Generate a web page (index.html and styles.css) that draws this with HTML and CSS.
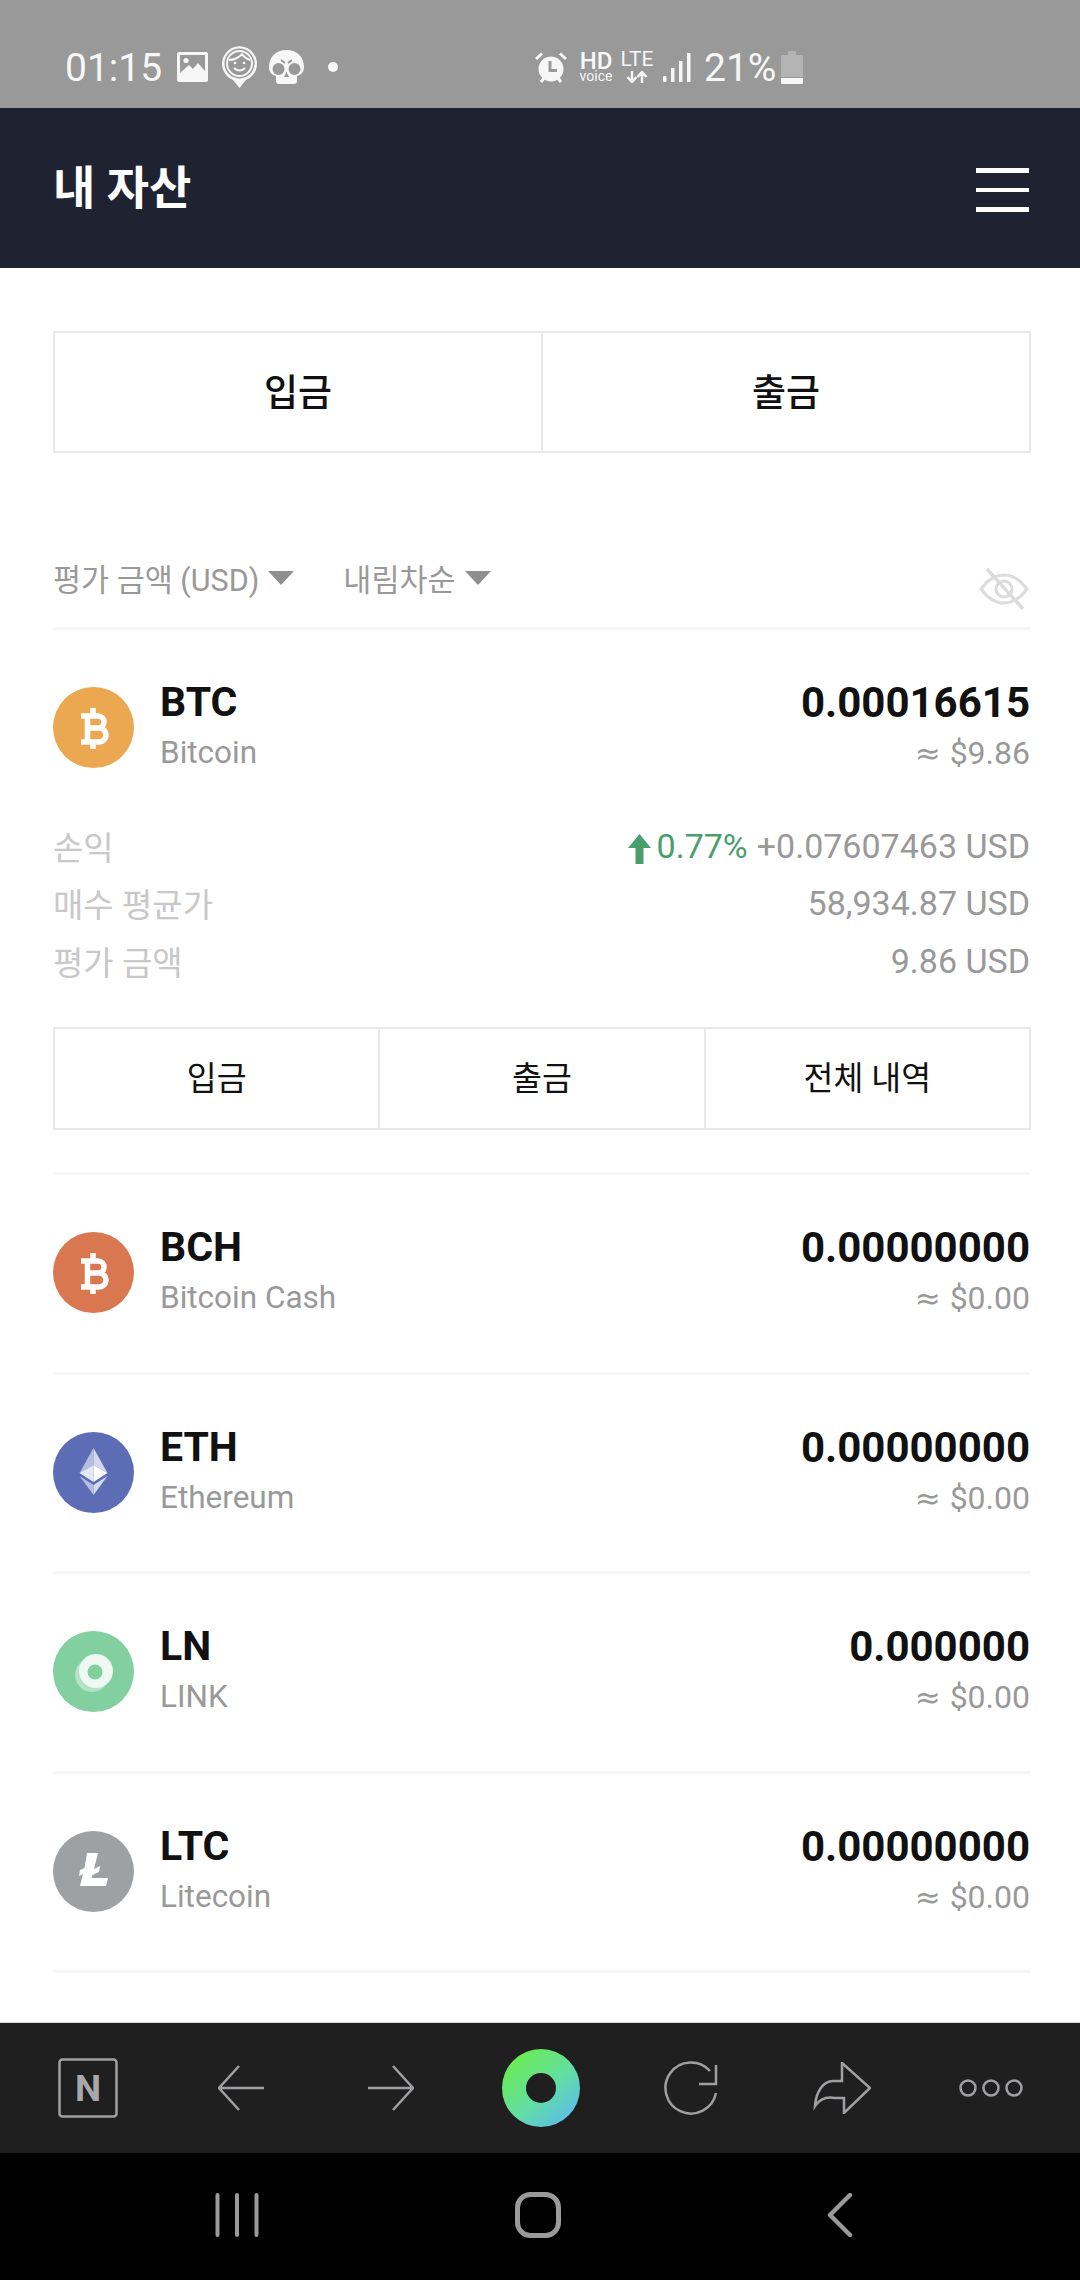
FILE: index.html
```html
<!DOCTYPE html>
<html lang="ko">
<head>
    <meta charset="UTF-8">
    <meta name="viewport" content="width=device-width, initial-scale=1.0">
    <title>내 자산</title>
    <link rel="stylesheet" href="styles.css">
</head>
<body>
    <div class="status-bar">
        <div class="status-left">
            <span class="status-time">01:15</span>
            <svg class="st-image" width="31" height="30" viewBox="0 0 31 30">
                <rect width="31" height="30" rx="2" fill="#f7f7f7"/>
                <rect x="3" y="3" width="25" height="20" fill="#999"/>
                <circle cx="9" cy="8.5" r="2.6" fill="#f7f7f7"/>
                <path d="M3 21 L12 13 L16 17 L21 11 L28 19 V24 H3 Z" fill="#f7f7f7"/>
            </svg>
            <svg class="st-pin" width="37" height="44" viewBox="0 0 37 44">
                <path d="M18.500 43 L12 35 A17.500 17.500 0 1 1 25 35 Z" fill="#f7f7f7"/>
                <circle cx="18.500" cy="18.500" r="15" fill="#999"/>
                <circle cx="18.500" cy="18.500" r="12.500" fill="none" stroke="#f7f7f7" stroke-width="2"/>
                <path d="M8 15 C12 15 18 13 21 9 C23 12 26 14 29 15" fill="none" stroke="#f7f7f7" stroke-width="2"/>
                <circle cx="14" cy="18" r="1.300" fill="#f7f7f7"/>
                <circle cx="23" cy="18" r="1.300" fill="#f7f7f7"/>
                <path d="M13 23 Q18.500 28 24 23" fill="none" stroke="#f7f7f7" stroke-width="2"/>
            </svg>
            <svg class="st-skull" width="35" height="34" viewBox="0 0 35 34">
                <path d="M17.500 0 C28 0 35 7 35 17 C35 22 32 25 28 26 V31 Q28 34 25 34 H10 Q7 34 7 31 V26 C3 25 0 22 0 17 C0 7 7 0 17.500 0 Z" fill="#f7f7f7"/>
                <circle cx="9.500" cy="19" r="6" fill="#999"/>
                <circle cx="25.500" cy="19" r="6" fill="#999"/>
                <path d="M12 10 L16 13 M23 10 L19 13" stroke="#999" stroke-width="2"/>
                <path d="M17.500 22 L20 27 H15 Z" fill="#999"/>
            </svg>
            <span class="st-dot"></span>
        </div>
        <div class="status-right">
            <svg class="st-alarm" width="32" height="32" viewBox="0 0 32 32">
                <path d="M1 7 L7 1.500 M31 7 L25 1.500 M6 30 L9 26 M26 30 L23 26" stroke="#f7f7f7" stroke-width="3"/>
                <circle cx="16" cy="17" r="12.500" fill="#f7f7f7"/>
                <path d="M15 9 V18.500 H22" fill="none" stroke="#999" stroke-width="3"/>
            </svg>
            <div class="st-hd">
                <span class="hd-big">HD</span>
                <span class="hd-small">voice</span>
            </div>
            <div class="st-lte">
                <span class="lte-text">LTE</span>
                <svg width="22" height="12" viewBox="0 0 22 12">
                    <path d="M6 0 V10 M1.500 6 L6 11 L10.500 6 M16 12 V2 M11.500 6 L16 1 L20.500 6" fill="none" stroke="#f7f7f7" stroke-width="2.400"/>
                </svg>
            </div>
            <svg class="st-signal" width="28" height="29" viewBox="0 0 28 29">
                <rect x="0" y="23" width="3.500" height="6" rx="1" fill="#f7f7f7"/>
                <rect x="8" y="15" width="3.500" height="14" fill="#f7f7f7"/>
                <rect x="16" y="8" width="3.500" height="21" fill="#f7f7f7"/>
                <rect x="24" y="0" width="3.500" height="29" fill="#f7f7f7"/>
            </svg>
            <span class="status-pct">21%</span>
            <svg class="st-battery" width="22" height="33" viewBox="0 0 22 33">
                <path d="M7 0 H15 V4 H21 Q22 4 22 5 V26 H0 V5 Q0 4 1 4 H7 Z" fill="#b4b4b4"/>
                <path d="M0 27 H22 V32 Q22 33 21 33 H1 Q0 33 0 32 Z" fill="#f7f7f7"/>
            </svg>
        </div>
    </div>

    <header class="top-bar">
        <h1>내 자산</h1>
        <div class="hamburger"><span></span><span></span><span></span></div>
    </header>

    <main class="content">
        <div class="main-actions">
            <div class="main-action">입금</div>
            <div class="main-action">출금</div>
        </div>

        <div class="filter-row">
            <div class="filter">평가 금액 (USD)<i class="caret"></i></div>
            <div class="filter">내림차순<i class="caret"></i></div>
            <svg class="eye-off" width="50" height="42" viewBox="0 0 50 42">
                <path d="M2 21 C10 10 17 7 25 7 C33 7 40 10 48 21 C40 32 33 35 25 35 C17 35 10 32 2 21 Z" fill="none" stroke="#dcdcdc" stroke-width="3"/>
                <circle cx="25" cy="21" r="8" fill="none" stroke="#dcdcdc" stroke-width="3"/>
                <path d="M8 1 L44 41" stroke="#dcdcdc" stroke-width="3.500"/>
            </svg>
        </div>

        <section class="coin coin-open">
            <div class="coin-head">
                <svg class="coin-icon" viewBox="0 0 81 81">
                    <circle cx="40.500" cy="40.500" r="40.500" fill="#eca850"/>
                    <path d="M28 29 H45 A6 6 0 0 1 45 41 H34 M34 41 H46 A7 7 0 0 1 46 55 H28 M34.500 29 V55 M40 21 V29 M40 55 V62" fill="none" stroke="#fff" stroke-width="5.500"/>
                </svg>
                <div class="coin-name">
                    <div class="coin-sym">BTC</div>
                    <div class="coin-full">Bitcoin</div>
                </div>
                <div class="coin-amount">
                    <div class="coin-qty">0.00016615</div>
                    <div class="coin-usd"><span class="approx">≈</span>$9.86</div>
                </div>
            </div>
            <div class="details">
                <div class="detail">
                    <span class="detail-label">손익</span>
                    <span class="detail-value">
                        <svg class="up-arrow" width="23" height="30" viewBox="0 0 23 30"><path d="M11.500 0 L23 14 H15.500 V30 H7.500 V14 H0 Z" fill="#4a9e6e"/></svg>
                        <span class="gain">0.77%</span>
                        <span>+0.07607463 USD</span>
                    </span>
                </div>
                <div class="detail">
                    <span class="detail-label">매수 평균가</span>
                    <span class="detail-value">58,934.87 USD</span>
                </div>
                <div class="detail">
                    <span class="detail-label">평가 금액</span>
                    <span class="detail-value">9.86 USD</span>
                </div>
            </div>
            <div class="coin-actions">
                <div class="coin-action">입금</div>
                <div class="coin-action">출금</div>
                <div class="coin-action">전체 내역</div>
            </div>
        </section>

        <section class="coin coin-row">
            <div class="coin-head">
                <svg class="coin-icon" viewBox="0 0 81 81">
                    <circle cx="40.500" cy="40.500" r="40.500" fill="#d97750"/>
                    <path d="M28 29 H45 A6 6 0 0 1 45 41 H34 M34 41 H46 A7 7 0 0 1 46 55 H28 M34.500 29 V55 M40 21 V29 M40 55 V62" fill="none" stroke="#fff" stroke-width="5.500"/>
                </svg>
                <div class="coin-name">
                    <div class="coin-sym">BCH</div>
                    <div class="coin-full">Bitcoin Cash</div>
                </div>
                <div class="coin-amount">
                    <div class="coin-qty">0.00000000</div>
                    <div class="coin-usd"><span class="approx">≈</span>$0.00</div>
                </div>
            </div>
        </section>

        <section class="coin coin-row">
            <div class="coin-head">
                <svg class="coin-icon" viewBox="0 0 81 81">
                    <circle cx="40.500" cy="40.500" r="40.500" fill="#5c6db5"/>
                    <path d="M40.500 16 L26.500 41 L40.500 33 Z" fill="#b4bddf"/>
                    <path d="M40.500 16 L54.500 41 L40.500 33 Z" fill="#d3d8ec"/>
                    <path d="M26.500 41 L40.500 33 L40.500 50 Z" fill="#e4e7f4"/>
                    <path d="M54.500 41 L40.500 33 L40.500 50 Z" fill="#fdfdfe"/>
                    <path d="M26.500 44 L40.500 53 V63 Z" fill="#b4bddf"/>
                    <path d="M54.500 44 L40.500 53 V63 Z" fill="#d3d8ec"/>
                </svg>
                <div class="coin-name">
                    <div class="coin-sym">ETH</div>
                    <div class="coin-full">Ethereum</div>
                </div>
                <div class="coin-amount">
                    <div class="coin-qty">0.00000000</div>
                    <div class="coin-usd"><span class="approx">≈</span>$0.00</div>
                </div>
            </div>
        </section>

        <section class="coin coin-row">
            <div class="coin-head">
                <svg class="coin-icon" viewBox="0 0 81 81">
                    <circle cx="40.500" cy="40.500" r="40.500" fill="#82cf9f"/>
                    <circle cx="39" cy="44" r="17" fill="#fff" fill-opacity=".4"/>
                    <circle cx="43" cy="40" r="17" fill="#eff9f3"/>
                    <circle cx="42" cy="41" r="7.500" fill="#82cf9f"/>
                </svg>
                <div class="coin-name">
                    <div class="coin-sym">LN</div>
                    <div class="coin-full">LINK</div>
                </div>
                <div class="coin-amount">
                    <div class="coin-qty">0.000000</div>
                    <div class="coin-usd"><span class="approx">≈</span>$0.00</div>
                </div>
            </div>
        </section>

        <section class="coin coin-row">
            <div class="coin-head">
                <svg class="coin-icon" viewBox="0 0 81 81">
                    <circle cx="40.500" cy="40.500" r="40.500" fill="#9ea1a4"/>
                    <path d="M34 22 H45 L41 38 L47 35 L46 41 L39.500 44 L38.500 47 H55 L53 55 H27 L30 43 L26 45 L27 39 L31.500 37 Z" fill="#fff"/>
                </svg>
                <div class="coin-name">
                    <div class="coin-sym">LTC</div>
                    <div class="coin-full">Litecoin</div>
                </div>
                <div class="coin-amount">
                    <div class="coin-qty">0.00000000</div>
                    <div class="coin-usd"><span class="approx">≈</span>$0.00</div>
                </div>
            </div>
        </section>
    </main>

    <nav class="toolbar">
        <svg class="tool-n" width="60" height="60" viewBox="0 0 60 60">
            <rect x="1.500" y="1.500" width="57" height="57" rx="3" fill="none" stroke="#a0a0a4" stroke-width="2.500"/>
            <text x="30" y="43" text-anchor="middle" font-family="Roboto" font-size="37" font-weight="700" fill="#a8a8ac">N</text>
        </svg>
        <svg width="46" height="46" viewBox="0 0 46 46">
            <path d="M46 23 H2 M21 1 L1 23 L21 45" fill="none" stroke="#a0a0a4" stroke-width="2.500"/>
        </svg>
        <svg width="46" height="46" viewBox="0 0 46 46">
            <path d="M0 23 H44 M25 1 L45 23 L25 45" fill="none" stroke="#a0a0a4" stroke-width="2.500"/>
        </svg>
        <svg width="78" height="78" viewBox="0 0 78 78">
            <defs>
                <linearGradient id="ringGrad" x1="0.150" y1="0.100" x2="0.850" y2="0.900">
                    <stop offset="0" stop-color="#6cea52"/>
                    <stop offset="0.550" stop-color="#62dfa0"/>
                    <stop offset="1" stop-color="#5cbfe6"/>
                </linearGradient>
            </defs>
            <circle cx="39" cy="39" r="39" fill="url(#ringGrad)"/>
            <circle cx="39" cy="39" r="15" fill="#1f1f1f"/>
        </svg>
        <svg width="54" height="54" viewBox="0 0 54 54">
            <path d="M52 32 A25.500 25.500 0 1 1 46 10 M52 4 V23 H35" fill="none" stroke="#a0a0a4" stroke-width="2.500"/>
        </svg>
        <svg class="tool-share" width="58" height="52" viewBox="0 0 58 52">
            <path d="M29 1 L57 26 L31 51 V36 H22 C12 34 6 38 2 44 C3 30 10 19 20 19 H29 Z" fill="none" stroke="#a0a0a4" stroke-width="2.500"/>
        </svg>
        <svg width="64" height="18" viewBox="0 0 64 18">
            <circle cx="9" cy="9" r="7.500" fill="none" stroke="#a0a0a4" stroke-width="2.500"/>
            <circle cx="32" cy="9" r="7.500" fill="none" stroke="#a0a0a4" stroke-width="2.500"/>
            <circle cx="55" cy="9" r="7.500" fill="none" stroke="#a0a0a4" stroke-width="2.500"/>
        </svg>
    </nav>

    <div class="nav-bar">
        <svg width="44" height="44" viewBox="0 0 44 44">
            <path d="M2.500 2 V42 M22 2 V42 M41.500 2 V42" fill="none" stroke="#9a9a9a" stroke-width="4" stroke-linecap="round"/>
        </svg>
        <svg width="46" height="46" viewBox="0 0 46 46">
            <rect x="2.500" y="2.500" width="41" height="41" rx="13" fill="none" stroke="#9a9a9a" stroke-width="5"/>
        </svg>
        <svg width="26" height="44" viewBox="0 0 26 44">
            <path d="M23 2 L3 22 L23 42" fill="none" stroke="#9a9a9a" stroke-width="4.500" stroke-linecap="round" stroke-linejoin="round"/>
        </svg>
    </div>
</body>
</html>
```

FILE: styles.css
```css
* {
    box-sizing: border-box;
}

html, body {
    margin: 0;
    padding: 0;
}

body {
    width: 1080px;
    height: 2280px;
    display: flex;
    flex-direction: column;
    overflow: hidden;
    font-family: Roboto, "Noto Sans CJK KR", sans-serif;
    background-color: #fff;
    color: #111;
}

/* status bar */
.status-bar {
    height: 108px;
    flex: none;
    display: flex;
    background-color: #999;
    color: #f7f7f7;
}

.status-left, .status-right {
    display: flex;
    align-items: center;
    height: 108px;
}

.status-left {
    padding-left: 65px;
}

.status-right {
    padding-left: 197px;
}

.status-time {
    font-size: 39px;
    margin-top: 27px;
    width: 112px;
}

.st-image {
    margin-top: 26px;
}

.st-pin {
    margin-left: 13px;
    margin-top: 26px;
}

.st-skull {
    margin-left: 11px;
    margin-top: 26px;
}

.st-dot {
    width: 10px;
    height: 10px;
    border-radius: 50%;
    background-color: #f7f7f7;
    margin-left: 24px;
    margin-top: 26px;
}

.st-alarm {
    margin-top: 27px;
}

.st-hd {
    margin-left: 13px;
    margin-top: 26px;
    width: 32px;
    display: flex;
    flex-direction: column;
    align-items: center;
}

.hd-big {
    font-size: 24px;
    font-weight: 500;
    line-height: 19px;
}

.hd-small {
    font-size: 14px;
    line-height: 11px;
}

.st-lte {
    margin-left: 9px;
    margin-top: 26px;
    width: 32px;
    display: flex;
    flex-direction: column;
    align-items: center;
    gap: 4px;
}

.lte-text {
    font-size: 21px;
    line-height: 15px;
}

.st-signal {
    margin-left: 10px;
    margin-top: 27px;
}

.status-pct {
    font-size: 39px;
    margin-left: 13px;
    margin-top: 27px;
}

.st-battery {
    margin-left: 5px;
    margin-top: 26px;
}

/* header */
.top-bar {
    height: 160px;
    flex: none;
    background-color: #1f2331;
    display: flex;
    align-items: center;
    justify-content: space-between;
    padding: 0 51px 0 53px;
}

.top-bar h1 {
    margin: 0 0 8px;
    color: #fff;
    font-size: 46px;
    font-weight: 700;
}

.hamburger {
    width: 53px;
    display: flex;
    flex-direction: column;
    gap: 15px;
    margin-top: 4px;
}

.hamburger span {
    height: 4.5px;
    background-color: #fff;
}

/* content */
.content {
    flex: 1;
    min-height: 0;
    overflow: hidden;
    padding: 63px 49px 0 53px;
    background: linear-gradient(#fff 1995px, #f8f9fa);
}

.main-actions {
    display: flex;
    height: 122px;
    border: 2px solid #e8e8e8;
}

.main-action {
    flex: 1;
    display: flex;
    align-items: center;
    justify-content: center;
    padding-bottom: 5px;
    font-size: 37px;
    font-weight: 500;
}

.main-action + .main-action {
    border-left: 2px solid #e8e8e8;
}

.filter-row {
    height: 177px;
    display: flex;
    align-items: flex-start;
    margin-right: 1px;
    padding-top: 106px;
    border-bottom: 3px solid #f6f6f6;
    font-size: 30.5px;
    color: #999;
}

.filter {
    display: flex;
    align-items: center;
    margin-right: 49px;
    line-height: 44px;
}

.caret {
    width: 0;
    height: 0;
    margin-left: 9px;
    margin-bottom: 6px;
    border-left: 13px solid transparent;
    border-right: 13px solid transparent;
    border-top: 14px solid #8f8f8f;
}

.eye-off {
    margin-left: auto;
    margin-top: 9px;
    margin-right: 1px;
}

/* coins */
.coin {
    margin-right: 1px;
    border-bottom: 3px solid #f6f6f6;
    padding-top: 57px;
}

.coin-open {
    height: 545px;
}

.coin-row {
    height: 199.5px;
}

.coin-head {
    display: flex;
    align-items: center;
    height: 81px;
}

.coin-icon {
    width: 81px;
    height: 81px;
    flex: none;
    margin-right: 26px;
}

.coin-name {
    flex: 1;
}

.coin-amount {
    text-align: right;
}

.coin-sym, .coin-qty {
    font-size: 42px;
    font-weight: 700;
    line-height: 41px;
    margin-bottom: 10px;
    color: #111;
}

.coin-sym {
    font-size: 41px;
}

.coin-full {
    font-size: 31.5px;
    line-height: 40px;
    color: #999;
}

.coin-usd {
    font-size: 32px;
    line-height: 40px;
    color: #999;
}

.approx {
    font-family: "DejaVu Sans", sans-serif;
    font-size: 31px;
    margin-right: 9px;
}

.details {
    margin-top: 49px;
}

.detail {
    display: flex;
    justify-content: space-between;
    align-items: center;
    height: 57.5px;
}

.detail-label {
    font-size: 33px;
    color: #c8c8c8;
}

.detail-value {
    font-size: 34px;
    color: #999;
    display: flex;
    align-items: center;
}

.up-arrow {
    margin-right: 6px;
    margin-top: 6px;
}

.gain {
    color: #4a9e6e;
    margin-right: 9px;
}

.coin-actions {
    display: flex;
    height: 103px;
    margin-top: 37px;
    margin-right: -1px;
    border: 2px solid #e8e8e8;
}

.coin-action {
    flex: 1;
    display: flex;
    align-items: center;
    justify-content: center;
    padding-bottom: 6px;
    font-size: 32.5px;
}

.coin-action + .coin-action {
    border-left: 2px solid #e8e8e8;
}

/* browser toolbar */
.toolbar {
    height: 131px;
    flex: none;
    background-color: #1f1f1f;
    border-top: 1px solid #d8d8d8;
    display: grid;
    grid-template-columns: repeat(7, 150px);
    justify-items: center;
    align-items: center;
    padding-left: 16px;
}

.tool-n {
    margin-right: 6px;
}

.tool-share {
    margin-left: 2px;
}

/* android nav */
.nav-bar {
    height: 127px;
    flex: none;
    background-color: #000;
    display: grid;
    grid-template-columns: repeat(3, 301.5px);
    justify-items: center;
    align-items: center;
    padding: 0 0 4px 86px;
}
```
